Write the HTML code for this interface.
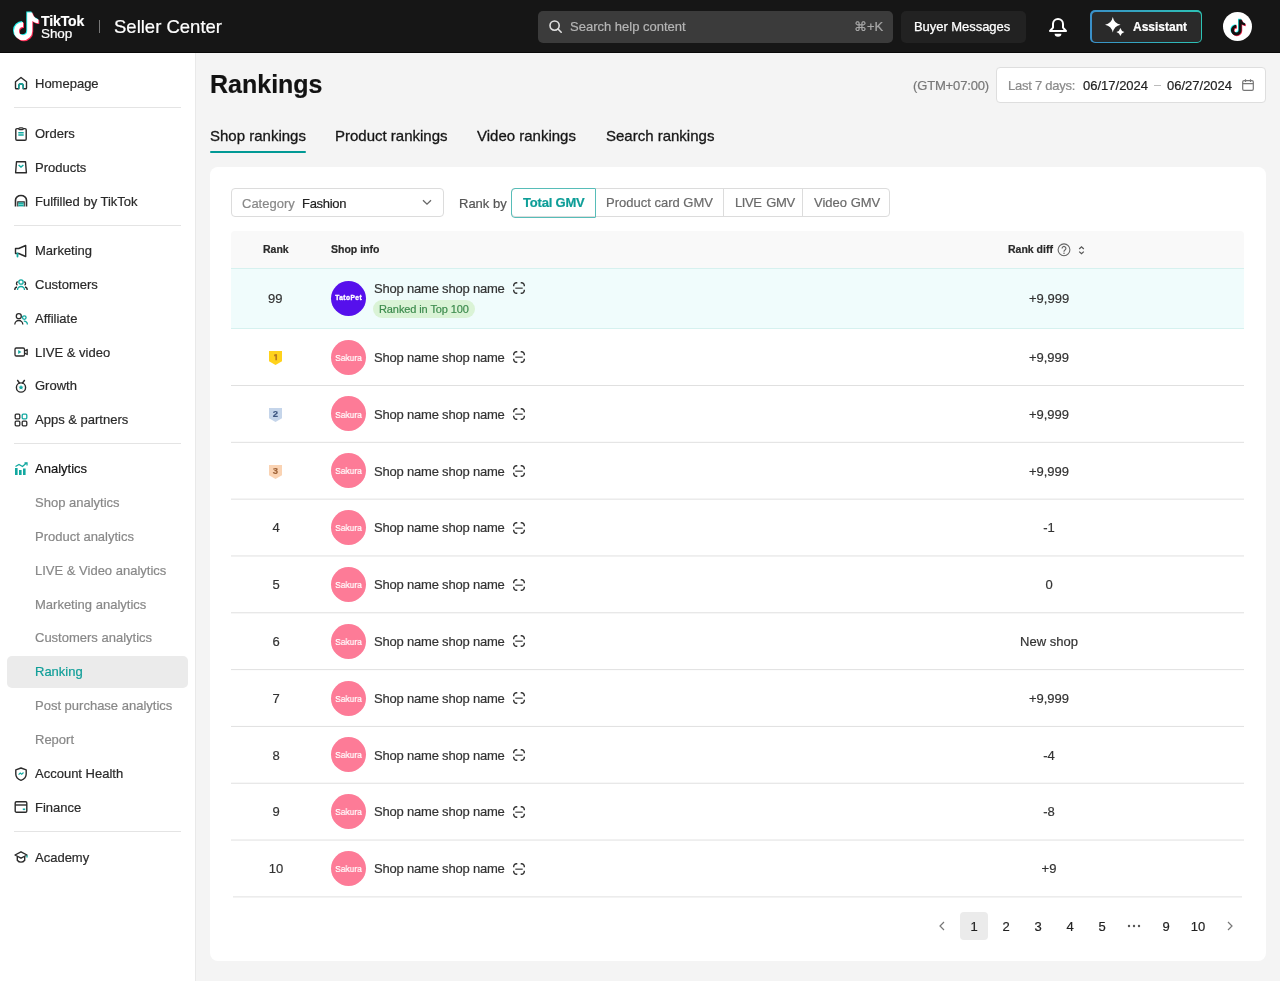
<!DOCTYPE html>
<html><head><meta charset="utf-8"><style>
*{box-sizing:border-box;margin:0;padding:0}
html,body{width:1280px;height:981px;overflow:hidden;background:#f4f4f4;font-family:"Liberation Sans",sans-serif;color:#121212}
.t{position:absolute;white-space:nowrap;line-height:1;will-change:transform;-webkit-text-stroke-width:0.2px}
.a{position:absolute}
svg{position:absolute;overflow:visible}
#hdr{position:absolute;left:0;top:0;width:1280px;height:53px;background:#161616;border-bottom:1px solid #080808}
#side{position:absolute;left:0;top:53px;width:196px;height:928px;background:#fff;border-right:1px solid #e9e9e9}
.nav{font-size:13px;color:#2a2a2a}
.sub{font-size:13px;color:#888}
.dv{position:absolute;left:14px;width:167px;height:1px;background:#e4e4e4}
.card{position:absolute;left:210px;top:167px;width:1056px;height:794px;background:#fff;border-radius:8px}
.row{position:absolute;left:231px;width:1013px}
.cell{font-size:13px;color:#333}
</style></head><body>
<div id="hdr"></div>
<svg style="left:14px;top:11.8px" width="25" height="29" viewBox="0 0 25 29"><path d="M13.2 0.5H18.3C18.7 3.6 21.2 6.8 24.4 7.3V11.2C21.9 11.1 19.9 10.3 18.3 9.1V19.1A9.2 9.2 0 1 1 9.1 9.9V15A4.1 4.1 0 1 0 13.2 19.1Z" fill="#25f4ee" transform="translate(-0.9,-0.9)"/><path d="M13.2 0.5H18.3C18.7 3.6 21.2 6.8 24.4 7.3V11.2C21.9 11.1 19.9 10.3 18.3 9.1V19.1A9.2 9.2 0 1 1 9.1 9.9V15A4.1 4.1 0 1 0 13.2 19.1Z" fill="#fe2c55" transform="translate(0.9,0.9)"/><path d="M13.2 0.5H18.3C18.7 3.6 21.2 6.8 24.4 7.3V11.2C21.9 11.1 19.9 10.3 18.3 9.1V19.1A9.2 9.2 0 1 1 9.1 9.9V15A4.1 4.1 0 1 0 13.2 19.1Z" fill="#fff"/></svg>
<div class="t" style="left:41px;top:13.75px;font-size:14px;font-weight:700;color:#fff;letter-spacing:-0.1px">TikTok</div>
<div class="t" style="left:41px;top:26.77px;font-size:13.5px;color:#fff;letter-spacing:-0.1px;-webkit-text-stroke:0.2px #fff">Shop</div>
<div class="a" style="left:99px;top:20px;width:1px;height:13px;background:#777"></div>
<div class="t" style="left:114px;top:17.54px;font-size:18.5px;color:#fff;-webkit-text-stroke:0.2px #fff">Seller Center</div>
<div class="a" style="left:538px;top:11px;width:355px;height:32px;background:#3b3b3b;border-radius:5px"></div>
<svg style="left:549px;top:20px" width="13" height="13" viewBox="0 0 13 13"><circle cx="5.6" cy="5.6" r="4.6" fill="none" stroke="#e0e0e0" stroke-width="1.6"/><path d="M9 9l3.2 3.2" stroke="#e0e0e0" stroke-width="1.6" stroke-linecap="round"/></svg>
<div class="t" style="left:570px;top:20.0px;font-size:13px;color:#b5b5b5">Search help content</div>
<div class="t" style="left:854px;top:20.0px;font-size:13px;color:#a8a8a8">&#8984;+K</div>
<div class="a" style="left:901px;top:11px;width:125px;height:32px;background:#222;border-radius:5px"></div>
<div class="t" style="left:914.3px;top:20.0px;font-size:13px;color:#fff;letter-spacing:-0.05px;-webkit-text-stroke:0.25px #fff">Buyer Messages</div>
<svg style="left:1043px;top:12px" width="30" height="30" viewBox="0 0 30 30"><path d="M7 19L10 15.6V11.9A5 5 0 0 1 20 11.9V15.6L23 19Z" fill="none" stroke="#fff" stroke-width="2" stroke-linejoin="round"/><path d="M11.6 21.8H18.4A3.4 2.9 0 0 1 11.6 21.8Z" fill="#fff"/></svg>
<div class="a" style="left:1090px;top:10px;width:112px;height:33px;border-radius:5px;background:linear-gradient(90deg,#3a8fc8,#2cc3b5);padding:1.5px"><div style="width:100%;height:100%;background:#2a2a2a;border-radius:4px"></div></div>
<svg style="left:1100px;top:12px" width="30" height="30" viewBox="1100 12 30 30"><path d="M1112.8 16.9Q1114.1 23.4 1120.6 24.7Q1114.1 26.0 1112.8 32.5Q1111.5 26.0 1105.0 24.7Q1111.5 23.4 1112.8 16.9Z" fill="#fff"/><circle cx="1120.4" cy="32.1" r="5" fill="#2a2a2a"/><path d="M1120.4 28.1Q1121.2 31.3 1124.4 32.1Q1121.2 32.9 1120.4 36.1Q1119.6000000000001 32.9 1116.4 32.1Q1119.6000000000001 31.3 1120.4 28.1Z" fill="#fff"/></svg>
<div class="t" style="left:1133px;top:21.04px;font-size:12px;font-weight:700;color:#fff">Assistant</div>
<div class="a" style="left:1223px;top:12px;width:29px;height:29px;border-radius:50%;background:#fff"></div>
<svg style="left:1230.5px;top:18.5px" width="14.5" height="17" viewBox="0 0 25 29"><path d="M13.2 0.5H18.3C18.7 3.6 21.2 6.8 24.4 7.3V11.2C21.9 11.1 19.9 10.3 18.3 9.1V19.1A9.2 9.2 0 1 1 9.1 9.9V15A4.1 4.1 0 1 0 13.2 19.1Z" fill="#25f4ee" transform="translate(-1.1,-1.1)"/><path d="M13.2 0.5H18.3C18.7 3.6 21.2 6.8 24.4 7.3V11.2C21.9 11.1 19.9 10.3 18.3 9.1V19.1A9.2 9.2 0 1 1 9.1 9.9V15A4.1 4.1 0 1 0 13.2 19.1Z" fill="#fe2c55" transform="translate(1.1,1.1)"/><path d="M13.2 0.5H18.3C18.7 3.6 21.2 6.8 24.4 7.3V11.2C21.9 11.1 19.9 10.3 18.3 9.1V19.1A9.2 9.2 0 1 1 9.1 9.9V15A4.1 4.1 0 1 0 13.2 19.1Z" fill="#111"/></svg>
<div id="side"></div>
<svg style="left:14px;top:76.2px" width="14" height="14" viewBox="0 0 14 14"><path d="M1.5 5.8L7 1.5l5.5 4.3v6.2c0 .5-.4.8-.8.8H9.2V10a2.2 2.2 0 0 0-4.4 0v2.8H2.3c-.5 0-.8-.3-.8-.8z" fill="none" stroke="#2b2b2b" stroke-width="1.4" stroke-linejoin="round"/><path d="M4.8 12.8V10a2.2 2.2 0 0 1 4.4 0v2.8" fill="none" stroke="#12a8a0" stroke-width="1.4"/></svg>
<div class="t nav" style="left:35px;top:76.7px;">Homepage</div>
<div class="dv" style="top:107px"></div>
<svg style="left:14px;top:126.5px" width="14" height="14" viewBox="0 0 14 14"><rect x="1.8" y="1.6" width="10.4" height="11.6" rx="1.2" fill="none" stroke="#2b2b2b" stroke-width="1.4"/><rect x="4.8" y="0.8" width="4.4" height="1.8" rx=".9" fill="#fff" stroke="#2b2b2b" stroke-width="1.2"/><path d="M4.3 5.8h5.4M4.3 8h5.4" stroke="#12a8a0" stroke-width="1.4"/></svg>
<div class="t nav" style="left:35px;top:127.0px;">Orders</div>
<svg style="left:14px;top:160.3px" width="14" height="14" viewBox="0 0 14 14"><path d="M2.5 1.8h9l.9 11H1.6z" fill="none" stroke="#2b2b2b" stroke-width="1.4" stroke-linejoin="round"/><path d="M4.6 5l2.4 2 2.4-2" fill="none" stroke="#12a8a0" stroke-width="1.5"/></svg>
<div class="t nav" style="left:35px;top:160.8px;">Products</div>
<svg style="left:14px;top:194.0px" width="14" height="14" viewBox="0 0 14 14"><path d="M1.5 12.5V6a5.5 4.5 0 0 1 11 0v6.5" fill="none" stroke="#2b2b2b" stroke-width="1.6"/><path d="M3.8 12.5V7.8h6.4v4.7" fill="none" stroke="#2b2b2b" stroke-width="1.2"/><rect x="4.4" y="8.4" width="5.2" height="4" fill="#12a8a0"/><path d="M4.4 10.4h5.2" stroke="#bfe" stroke-width=".6"/></svg>
<div class="t nav" style="left:35px;top:194.5px;">Fulfilled by TikTok</div>
<div class="dv" style="top:225px"></div>
<svg style="left:14px;top:243.8px" width="14" height="14" viewBox="0 0 14 14"><path d="M1.5 4.5h3.2l7-3v11l-7-3H1.5z" fill="none" stroke="#2b2b2b" stroke-width="1.4" stroke-linejoin="round"/><path d="M3.5 9.5v3" stroke="#12a8a0" stroke-width="1.8" stroke-linecap="round"/></svg>
<div class="t nav" style="left:35px;top:244.3px;">Marketing</div>
<svg style="left:14px;top:277.6px" width="14" height="14" viewBox="0 0 14 14"><circle cx="7" cy="4" r="2.2" fill="none" stroke="#12a8a0" stroke-width="1.3"/><path d="M3.5 12a3.5 3.5 0 0 1 7 0" fill="none" stroke="#12a8a0" stroke-width="1.3"/><path d="M3.4 7.2a2 2 0 0 1 .4-3.6M10.6 7.2a2 2 0 0 0-.4-3.6M.8 12a3 3 0 0 1 2.2-3M13.2 12a3 3 0 0 0-2.2-3" fill="none" stroke="#2b2b2b" stroke-width="1.3"/></svg>
<div class="t nav" style="left:35px;top:278.1px;">Customers</div>
<svg style="left:14px;top:311.5px" width="14" height="14" viewBox="0 0 14 14"><circle cx="4.8" cy="4.2" r="2.5" fill="none" stroke="#2b2b2b" stroke-width="1.3"/><path d="M.8 12.5a4 4 0 0 1 8 0" fill="none" stroke="#2b2b2b" stroke-width="1.3"/><circle cx="10.3" cy="5.6" r="1.8" fill="none" stroke="#12a8a0" stroke-width="1.3"/><path d="M9.8 9.2a3.2 3.2 0 0 1 3.6 3.3" fill="none" stroke="#12a8a0" stroke-width="1.3"/></svg>
<div class="t nav" style="left:35px;top:312.0px;">Affiliate</div>
<svg style="left:14px;top:345.2px" width="14" height="14" viewBox="0 0 14 14"><rect x="1" y="3" width="9.5" height="8" rx="1.3" fill="none" stroke="#2b2b2b" stroke-width="1.3"/><path d="M10.5 6l2.7-1.5v5L10.5 8" fill="none" stroke="#2b2b2b" stroke-width="1.3" stroke-linejoin="round"/><path d="M4.2 5v4l3.2-2z" fill="#12a8a0"/></svg>
<div class="t nav" style="left:35px;top:345.7px;">LIVE &amp; video</div>
<svg style="left:14px;top:378.9px" width="14" height="14" viewBox="0 0 14 14"><circle cx="7" cy="8.5" r="4.6" fill="none" stroke="#2b2b2b" stroke-width="1.4"/><path d="M3.3 1l2.5 3.5M10.7 1L8.2 4.5" stroke="#2b2b2b" stroke-width="1.4"/><path d="M7 6l.8 1.6 1.7.2-1.3 1.1.4 1.7L7 9.7l-1.6.9.4-1.7-1.3-1.1 1.7-.2z" fill="#12a8a0"/></svg>
<div class="t nav" style="left:35px;top:379.4px;">Growth</div>
<svg style="left:14px;top:412.6px" width="14" height="14" viewBox="0 0 14 14"><rect x="1.2" y="1.2" width="4.6" height="4.6" rx="1" fill="none" stroke="#2b2b2b" stroke-width="1.3"/><rect x="8.2" y="1.2" width="4.6" height="4.6" rx="1" fill="none" stroke="#12a8a0" stroke-width="1.3"/><rect x="1.2" y="8.2" width="4.6" height="4.6" rx="1" fill="none" stroke="#2b2b2b" stroke-width="1.3"/><rect x="8.2" y="8.2" width="4.6" height="4.6" rx="1" fill="none" stroke="#2b2b2b" stroke-width="1.3"/></svg>
<div class="t nav" style="left:35px;top:413.1px;">Apps &amp; partners</div>
<div class="dv" style="top:443px"></div>
<svg style="left:14px;top:461.9px" width="14" height="14" viewBox="0 0 14 14"><path d="M1 6h2.6v7H1zM5 8h2.6v5H5zM9 6.5h2.6V13H9z" fill="#12a8a0"/><path d="M1.5 4.5l3.5-2 3.5 2 4-3.5" fill="none" stroke="#12a8a0" stroke-width="1.3"/><path d="M10.5 1h2.5v2.5" fill="none" stroke="#12a8a0" stroke-width="1.3"/></svg>
<div class="t nav" style="left:35px;top:462.4px;color:#121212;">Analytics</div>
<div class="t sub" style="left:35px;top:496.2px;">Shop analytics</div>
<div class="t sub" style="left:35px;top:530.0px;">Product analytics</div>
<div class="t sub" style="left:35px;top:563.8px;">LIVE &amp; Video analytics</div>
<div class="t sub" style="left:35px;top:597.5px;">Marketing analytics</div>
<div class="t sub" style="left:35px;top:631.3px;">Customers analytics</div>
<div class="a" style="left:7px;top:656px;width:181px;height:32px;background:#ebebeb;border-radius:5px"></div>
<div class="t sub" style="left:35px;top:665.0px;color:#0f9e98;-webkit-text-stroke:0.2px #0f9e98">Ranking</div>
<div class="t sub" style="left:35px;top:699.4px;">Post purchase analytics</div>
<div class="t sub" style="left:35px;top:733.2px;">Report</div>
<svg style="left:14px;top:766.5px" width="14" height="14" viewBox="0 0 14 14"><path d="M7 1l5.2 1.9v4.2c0 3-2.3 5.3-5.2 6.3C4.1 12.4 1.8 10.1 1.8 7.1V2.9z" fill="none" stroke="#2b2b2b" stroke-width="1.4" stroke-linejoin="round"/><path d="M4.6 7.6l1.6-1.6 1.5 1.3 1.8-1.8" fill="none" stroke="#12a8a0" stroke-width="1.2"/></svg>
<div class="t nav" style="left:35px;top:767.0px;">Account Health</div>
<svg style="left:14px;top:800.3px" width="14" height="14" viewBox="0 0 14 14"><rect x="1.2" y="1.8" width="11.6" height="10.4" rx="1.2" fill="none" stroke="#2b2b2b" stroke-width="1.4"/><path d="M1.2 5h11.6" stroke="#2b2b2b" stroke-width="1.4"/><path d="M8.8 9.3h2.4" stroke="#12a8a0" stroke-width="1.6"/></svg>
<div class="t nav" style="left:35px;top:800.8px;">Finance</div>
<div class="dv" style="top:831px"></div>
<svg style="left:14px;top:850.0px" width="14" height="14" viewBox="0 0 14 14"><path d="M7 1.8L13 5 7 8.2 1 5z" fill="none" stroke="#2b2b2b" stroke-width="1.4" stroke-linejoin="round"/><path d="M3.3 6.5v3.7c1 1.3 2.3 1.9 3.7 1.9s2.7-.6 3.7-1.9V6.5" fill="none" stroke="#2b2b2b" stroke-width="1.4"/><path d="M13 5.2v2.3" stroke="#12a8a0" stroke-width="1.4"/></svg>
<div class="t nav" style="left:35px;top:850.5px;">Academy</div>
<div class="t" style="left:209.5px;top:71.54px;font-size:25px;font-weight:700;color:#121212">Rankings</div>
<div class="t" style="left:912.5px;top:79.2px;font-size:13px;color:#777;letter-spacing:-0.15px">(GTM+07:00)</div>
<div class="a" style="left:996px;top:67px;width:270px;height:35.5px;background:#fff;border:1px solid #dedede;border-radius:4px"></div>
<div class="t" style="left:1007.5px;top:78.8px;font-size:13px;color:#8a8a8a;letter-spacing:-0.25px">Last 7 days:</div>
<div class="t" style="left:1082.5px;top:78.8px;font-size:13px;color:#222">06/17/2024</div>
<div class="a" style="left:1154px;top:85px;width:7px;height:1px;background:#bbb"></div>
<div class="t" style="left:1166.5px;top:78.8px;font-size:13px;color:#222">06/27/2024</div>
<svg style="left:1242px;top:79px" width="12" height="12" viewBox="0 0 12 12"><rect x=".7" y="1.7" width="10.6" height="9.6" rx="1.3" fill="none" stroke="#777" stroke-width="1.2"/><path d="M.7 4.6h10.6M3.5 .3v2.6M8.5 .3v2.6" stroke="#777" stroke-width="1.2"/></svg>
<div class="t" style="left:210px;top:127.6px;font-size:15px;color:#161616;-webkit-text-stroke:0.3px #161616">Shop rankings</div>
<div class="t" style="left:334.5px;top:127.6px;font-size:15px;color:#161616;-webkit-text-stroke:0.3px #161616">Product rankings</div>
<div class="t" style="left:477px;top:127.6px;font-size:15px;color:#161616;-webkit-text-stroke:0.3px #161616">Video rankings</div>
<div class="t" style="left:605.5px;top:127.6px;font-size:15px;color:#161616;-webkit-text-stroke:0.3px #161616">Search rankings</div>
<div class="a" style="left:210px;top:151px;width:96px;height:2px;background:#009995;border-radius:1px"></div>
<div class="card"></div>
<div class="a" style="left:231px;top:188px;width:213px;height:29px;border:1px solid #dcdcdc;border-radius:4px;background:#fff"></div>
<div class="t" style="left:242px;top:196.6px;font-size:13px;color:#888">Category</div>
<div class="t" style="left:302px;top:196.6px;font-size:13px;color:#222;letter-spacing:-0.3px">Fashion</div>
<svg style="left:422px;top:199px" width="10" height="7" viewBox="0 0 10 7"><path d="M1 1.2l4 4 4-4" fill="none" stroke="#666" stroke-width="1.3"/></svg>
<div class="t" style="left:458.5px;top:196.5px;font-size:13px;color:#555">Rank by</div>
<div class="a" style="left:511px;top:188px;width:379px;height:29px;border:1px solid #dcdcdc;border-radius:4px;background:#fff"></div>
<div class="a" style="left:595px;top:188px;width:1px;height:29px;background:#dcdcdc"></div>
<div class="a" style="left:723px;top:188px;width:1px;height:29px;background:#dcdcdc"></div>
<div class="a" style="left:802px;top:188px;width:1px;height:29px;background:#dcdcdc"></div>
<div class="a" style="left:511px;top:187.5px;width:84.5px;height:30px;border:1.3px solid #57bdb8;border-radius:4px 1px 1px 4px"></div>
<div class="t" style="left:523px;top:196.3px;font-size:13px;font-weight:700;color:#0d9d97;letter-spacing:-0.2px">Total GMV</div>
<div class="t" style="left:606px;top:196.3px;font-size:13px;color:#6a6a6a">Product card GMV</div>
<div class="t" style="left:735px;top:196.3px;font-size:13px;color:#6a6a6a;letter-spacing:-0.4px;word-spacing:1.5px">LIVE GMV</div>
<div class="t" style="left:813.5px;top:196.3px;font-size:13px;color:#6a6a6a">Video GMV</div>
<div class="a" style="left:231px;top:231px;width:1013px;height:37px;background:#f9f9f9;border-radius:4px 4px 0 0"></div>
<div class="t" style="left:262.5px;top:244.01px;font-size:10.5px;font-weight:700;color:#2a2a2a">Rank</div>
<div class="t" style="left:330.5px;top:244.01px;font-size:10.5px;font-weight:700;color:#2a2a2a">Shop info</div>
<div class="t" style="left:1008px;top:244.31px;font-size:10.5px;font-weight:700;color:#2a2a2a">Rank diff</div>
<svg style="left:1057px;top:243px" width="14" height="14" viewBox="0 0 14 14"><circle cx="7" cy="6.8" r="5.9" fill="none" stroke="#666" stroke-width="1.1"/><path d="M5.1 5.4a1.9 1.9 0 1 1 2.9 1.6c-.6.4-1 .8-1 1.5v.3" fill="none" stroke="#666" stroke-width="1.2"/><circle cx="7" cy="10.2" r=".75" fill="#666"/></svg>
<svg style="left:1078.3px;top:245.6px" width="7" height="9" viewBox="0 0 7 9"><path d="M1.2 3L3.5 0.9L5.8 3M1.2 5.6L3.5 7.7L5.8 5.6" fill="none" stroke="#555" stroke-width="1.2"/></svg>
<div class="a" style="left:231px;top:268px;width:1013px;height:61px;background:#f0fcfc;border-top:1px solid #d6f1ef;border-bottom:1px solid #d6f1ef"></div>
<div class="t cell" style="left:268px;top:291.7px">99</div>
<div class="a" style="left:331px;top:280.5px;width:35.3px;height:35.3px;border-radius:50%;background:#5610ec"></div>
<div class="t" style="left:331px;top:295.31px;width:35.3px;text-align:center;font-size:6.6px;font-weight:700;color:#fff;letter-spacing:0.45px;-webkit-text-stroke:0.35px #fff">TatoPet</div>
<div class="t cell" style="left:373.5px;top:281.5px;letter-spacing:-0.2px">Shop name shop name</div>
<svg style="left:513px;top:281.6px" width="12" height="12" viewBox="0 0 12 12"><path d="M0.7 4.3V3.5A2.8 2.8 0 0 1 3.5 0.7H4.3M7.7 0.7H8.5A2.8 2.8 0 0 1 11.3 3.5V4.3M11.3 7.7V8.5A2.8 2.8 0 0 1 8.5 11.3H7.7M4.3 11.3H3.5A2.8 2.8 0 0 1 0.7 8.5V7.7" fill="none" stroke="#333" stroke-width="1.4"/><path d="M2.3 6.2H9.7" stroke="#555" stroke-width="1.4"/></svg>
<div class="a" style="left:373px;top:300px;width:102px;height:18px;border-radius:9px;background:#daf3d6"></div>
<div class="t" style="left:379px;top:303.69px;font-size:11px;color:#3b8a4c;letter-spacing:-0.1px">Ranked in Top 100</div>
<div class="t cell" style="left:1029px;top:291.6px;width:40px;text-align:center">+9,999</div>
<svg style="left:0;top:0" width="1280" height="981" viewBox="0 0 1280 981"><rect x="231" y="385.0" width="1013" height="1" fill="#e0e0e0"/><rect x="231" y="441.82" width="1013" height="1" fill="#e0e0e0"/><rect x="231" y="498.64" width="1013" height="1" fill="#e0e0e0"/><rect x="231" y="555.46" width="1013" height="1" fill="#e0e0e0"/><rect x="231" y="612.28" width="1013" height="1" fill="#e0e0e0"/><rect x="231" y="669.1" width="1013" height="1" fill="#e0e0e0"/><rect x="231" y="725.92" width="1013" height="1" fill="#e0e0e0"/><rect x="231" y="782.74" width="1013" height="1" fill="#e0e0e0"/><rect x="231" y="839.56" width="1013" height="1" fill="#e0e0e0"/><rect x="233" y="896.38" width="1009" height="1" fill="#e0e0e0"/></svg>
<svg style="left:269px;top:351.25px" width="13" height="14" viewBox="0 0 13 14"><path d="M0 0h13v10.2L6.5 14.1 0 10.2z" fill="#ffd21c"/><path d="M5.2 4.6L7.2 3.8V9.3" fill="none" stroke="#b87a1e" stroke-width="1.7" stroke-linejoin="round" stroke-linecap="butt"/></svg>
<div class="a" style="left:331px;top:339.75px;width:35px;height:35px;border-radius:50%;background:#fd7b97"></div>
<div class="t" style="left:331px;width:35px;text-align:center;top:352.85px;font-size:9.8px;color:#fff;transform:scaleX(0.86)">Sakura</div>
<div class="t cell" style="left:373.5px;top:351.05px;letter-spacing:-0.2px">Shop name shop name</div>
<svg style="left:513px;top:351.45px" width="12" height="12" viewBox="0 0 12 12"><path d="M0.7 4.3V3.5A2.8 2.8 0 0 1 3.5 0.7H4.3M7.7 0.7H8.5A2.8 2.8 0 0 1 11.3 3.5V4.3M11.3 7.7V8.5A2.8 2.8 0 0 1 8.5 11.3H7.7M4.3 11.3H3.5A2.8 2.8 0 0 1 0.7 8.5V7.7" fill="none" stroke="#333" stroke-width="1.4"/><path d="M2.3 6.2H9.7" stroke="#555" stroke-width="1.4"/></svg>
<div class="t cell" style="left:998.5px;top:351.05px;width:100px;text-align:center">+9,999</div>
<svg style="left:269px;top:407.91px" width="13" height="14" viewBox="0 0 13 14"><path d="M0 0h13v10.2L6.5 14.1 0 10.2z" fill="#c5d5ea"/></svg>
<div class="t" style="left:269.3px;width:13px;text-align:center;top:409.47px;font-size:9.5px;font-weight:700;color:#3d5680">2</div>
<div class="a" style="left:331px;top:396.41px;width:35px;height:35px;border-radius:50%;background:#fd7b97"></div>
<div class="t" style="left:331px;width:35px;text-align:center;top:409.51px;font-size:9.8px;color:#fff;transform:scaleX(0.86)">Sakura</div>
<div class="t cell" style="left:373.5px;top:407.71px;letter-spacing:-0.2px">Shop name shop name</div>
<svg style="left:513px;top:408.11px" width="12" height="12" viewBox="0 0 12 12"><path d="M0.7 4.3V3.5A2.8 2.8 0 0 1 3.5 0.7H4.3M7.7 0.7H8.5A2.8 2.8 0 0 1 11.3 3.5V4.3M11.3 7.7V8.5A2.8 2.8 0 0 1 8.5 11.3H7.7M4.3 11.3H3.5A2.8 2.8 0 0 1 0.7 8.5V7.7" fill="none" stroke="#333" stroke-width="1.4"/><path d="M2.3 6.2H9.7" stroke="#555" stroke-width="1.4"/></svg>
<div class="t cell" style="left:998.5px;top:407.71px;width:100px;text-align:center">+9,999</div>
<svg style="left:269px;top:464.73px" width="13" height="14" viewBox="0 0 13 14"><path d="M0 0h13v10.2L6.5 14.1 0 10.2z" fill="#fad3b3"/></svg>
<div class="t" style="left:269.3px;width:13px;text-align:center;top:466.29px;font-size:9.5px;font-weight:700;color:#a0653a">3</div>
<div class="a" style="left:331px;top:453.23px;width:35px;height:35px;border-radius:50%;background:#fd7b97"></div>
<div class="t" style="left:331px;width:35px;text-align:center;top:466.33px;font-size:9.8px;color:#fff;transform:scaleX(0.86)">Sakura</div>
<div class="t cell" style="left:373.5px;top:464.53px;letter-spacing:-0.2px">Shop name shop name</div>
<svg style="left:513px;top:464.93px" width="12" height="12" viewBox="0 0 12 12"><path d="M0.7 4.3V3.5A2.8 2.8 0 0 1 3.5 0.7H4.3M7.7 0.7H8.5A2.8 2.8 0 0 1 11.3 3.5V4.3M11.3 7.7V8.5A2.8 2.8 0 0 1 8.5 11.3H7.7M4.3 11.3H3.5A2.8 2.8 0 0 1 0.7 8.5V7.7" fill="none" stroke="#333" stroke-width="1.4"/><path d="M2.3 6.2H9.7" stroke="#555" stroke-width="1.4"/></svg>
<div class="t cell" style="left:998.5px;top:464.53px;width:100px;text-align:center">+9,999</div>
<div class="t cell" style="left:255.5px;width:40px;text-align:center;top:521.35px">4</div>
<div class="a" style="left:331px;top:510.05px;width:35px;height:35px;border-radius:50%;background:#fd7b97"></div>
<div class="t" style="left:331px;width:35px;text-align:center;top:523.15px;font-size:9.8px;color:#fff;transform:scaleX(0.86)">Sakura</div>
<div class="t cell" style="left:373.5px;top:521.35px;letter-spacing:-0.2px">Shop name shop name</div>
<svg style="left:513px;top:521.75px" width="12" height="12" viewBox="0 0 12 12"><path d="M0.7 4.3V3.5A2.8 2.8 0 0 1 3.5 0.7H4.3M7.7 0.7H8.5A2.8 2.8 0 0 1 11.3 3.5V4.3M11.3 7.7V8.5A2.8 2.8 0 0 1 8.5 11.3H7.7M4.3 11.3H3.5A2.8 2.8 0 0 1 0.7 8.5V7.7" fill="none" stroke="#333" stroke-width="1.4"/><path d="M2.3 6.2H9.7" stroke="#555" stroke-width="1.4"/></svg>
<div class="t cell" style="left:998.5px;top:521.35px;width:100px;text-align:center">-1</div>
<div class="t cell" style="left:255.5px;width:40px;text-align:center;top:578.17px">5</div>
<div class="a" style="left:331px;top:566.87px;width:35px;height:35px;border-radius:50%;background:#fd7b97"></div>
<div class="t" style="left:331px;width:35px;text-align:center;top:579.97px;font-size:9.8px;color:#fff;transform:scaleX(0.86)">Sakura</div>
<div class="t cell" style="left:373.5px;top:578.17px;letter-spacing:-0.2px">Shop name shop name</div>
<svg style="left:513px;top:578.57px" width="12" height="12" viewBox="0 0 12 12"><path d="M0.7 4.3V3.5A2.8 2.8 0 0 1 3.5 0.7H4.3M7.7 0.7H8.5A2.8 2.8 0 0 1 11.3 3.5V4.3M11.3 7.7V8.5A2.8 2.8 0 0 1 8.5 11.3H7.7M4.3 11.3H3.5A2.8 2.8 0 0 1 0.7 8.5V7.7" fill="none" stroke="#333" stroke-width="1.4"/><path d="M2.3 6.2H9.7" stroke="#555" stroke-width="1.4"/></svg>
<div class="t cell" style="left:998.5px;top:578.17px;width:100px;text-align:center">0</div>
<div class="t cell" style="left:255.5px;width:40px;text-align:center;top:634.99px">6</div>
<div class="a" style="left:331px;top:623.69px;width:35px;height:35px;border-radius:50%;background:#fd7b97"></div>
<div class="t" style="left:331px;width:35px;text-align:center;top:636.79px;font-size:9.8px;color:#fff;transform:scaleX(0.86)">Sakura</div>
<div class="t cell" style="left:373.5px;top:634.99px;letter-spacing:-0.2px">Shop name shop name</div>
<svg style="left:513px;top:635.39px" width="12" height="12" viewBox="0 0 12 12"><path d="M0.7 4.3V3.5A2.8 2.8 0 0 1 3.5 0.7H4.3M7.7 0.7H8.5A2.8 2.8 0 0 1 11.3 3.5V4.3M11.3 7.7V8.5A2.8 2.8 0 0 1 8.5 11.3H7.7M4.3 11.3H3.5A2.8 2.8 0 0 1 0.7 8.5V7.7" fill="none" stroke="#333" stroke-width="1.4"/><path d="M2.3 6.2H9.7" stroke="#555" stroke-width="1.4"/></svg>
<div class="t cell" style="left:998.5px;top:634.99px;width:100px;text-align:center">New shop</div>
<div class="t cell" style="left:255.5px;width:40px;text-align:center;top:691.81px">7</div>
<div class="a" style="left:331px;top:680.51px;width:35px;height:35px;border-radius:50%;background:#fd7b97"></div>
<div class="t" style="left:331px;width:35px;text-align:center;top:693.61px;font-size:9.8px;color:#fff;transform:scaleX(0.86)">Sakura</div>
<div class="t cell" style="left:373.5px;top:691.81px;letter-spacing:-0.2px">Shop name shop name</div>
<svg style="left:513px;top:692.21px" width="12" height="12" viewBox="0 0 12 12"><path d="M0.7 4.3V3.5A2.8 2.8 0 0 1 3.5 0.7H4.3M7.7 0.7H8.5A2.8 2.8 0 0 1 11.3 3.5V4.3M11.3 7.7V8.5A2.8 2.8 0 0 1 8.5 11.3H7.7M4.3 11.3H3.5A2.8 2.8 0 0 1 0.7 8.5V7.7" fill="none" stroke="#333" stroke-width="1.4"/><path d="M2.3 6.2H9.7" stroke="#555" stroke-width="1.4"/></svg>
<div class="t cell" style="left:998.5px;top:691.81px;width:100px;text-align:center">+9,999</div>
<div class="t cell" style="left:255.5px;width:40px;text-align:center;top:748.63px">8</div>
<div class="a" style="left:331px;top:737.33px;width:35px;height:35px;border-radius:50%;background:#fd7b97"></div>
<div class="t" style="left:331px;width:35px;text-align:center;top:750.43px;font-size:9.8px;color:#fff;transform:scaleX(0.86)">Sakura</div>
<div class="t cell" style="left:373.5px;top:748.63px;letter-spacing:-0.2px">Shop name shop name</div>
<svg style="left:513px;top:749.03px" width="12" height="12" viewBox="0 0 12 12"><path d="M0.7 4.3V3.5A2.8 2.8 0 0 1 3.5 0.7H4.3M7.7 0.7H8.5A2.8 2.8 0 0 1 11.3 3.5V4.3M11.3 7.7V8.5A2.8 2.8 0 0 1 8.5 11.3H7.7M4.3 11.3H3.5A2.8 2.8 0 0 1 0.7 8.5V7.7" fill="none" stroke="#333" stroke-width="1.4"/><path d="M2.3 6.2H9.7" stroke="#555" stroke-width="1.4"/></svg>
<div class="t cell" style="left:998.5px;top:748.63px;width:100px;text-align:center">-4</div>
<div class="t cell" style="left:255.5px;width:40px;text-align:center;top:805.45px">9</div>
<div class="a" style="left:331px;top:794.15px;width:35px;height:35px;border-radius:50%;background:#fd7b97"></div>
<div class="t" style="left:331px;width:35px;text-align:center;top:807.25px;font-size:9.8px;color:#fff;transform:scaleX(0.86)">Sakura</div>
<div class="t cell" style="left:373.5px;top:805.45px;letter-spacing:-0.2px">Shop name shop name</div>
<svg style="left:513px;top:805.85px" width="12" height="12" viewBox="0 0 12 12"><path d="M0.7 4.3V3.5A2.8 2.8 0 0 1 3.5 0.7H4.3M7.7 0.7H8.5A2.8 2.8 0 0 1 11.3 3.5V4.3M11.3 7.7V8.5A2.8 2.8 0 0 1 8.5 11.3H7.7M4.3 11.3H3.5A2.8 2.8 0 0 1 0.7 8.5V7.7" fill="none" stroke="#333" stroke-width="1.4"/><path d="M2.3 6.2H9.7" stroke="#555" stroke-width="1.4"/></svg>
<div class="t cell" style="left:998.5px;top:805.45px;width:100px;text-align:center">-8</div>
<div class="t cell" style="left:255.5px;width:40px;text-align:center;top:862.27px">10</div>
<div class="a" style="left:331px;top:850.97px;width:35px;height:35px;border-radius:50%;background:#fd7b97"></div>
<div class="t" style="left:331px;width:35px;text-align:center;top:864.07px;font-size:9.8px;color:#fff;transform:scaleX(0.86)">Sakura</div>
<div class="t cell" style="left:373.5px;top:862.27px;letter-spacing:-0.2px">Shop name shop name</div>
<svg style="left:513px;top:862.67px" width="12" height="12" viewBox="0 0 12 12"><path d="M0.7 4.3V3.5A2.8 2.8 0 0 1 3.5 0.7H4.3M7.7 0.7H8.5A2.8 2.8 0 0 1 11.3 3.5V4.3M11.3 7.7V8.5A2.8 2.8 0 0 1 8.5 11.3H7.7M4.3 11.3H3.5A2.8 2.8 0 0 1 0.7 8.5V7.7" fill="none" stroke="#333" stroke-width="1.4"/><path d="M2.3 6.2H9.7" stroke="#555" stroke-width="1.4"/></svg>
<div class="t cell" style="left:998.5px;top:862.27px;width:100px;text-align:center">+9</div>
<div class="a" style="left:960px;top:912px;width:28px;height:28px;background:#ebebeb;border-radius:4px"></div>
<svg style="left:938px;top:921px" width="8" height="10" viewBox="0 0 8 10"><path d="M6 1L2 5l4 4" fill="none" stroke="#777" stroke-width="1.2"/></svg>
<svg style="left:1226px;top:921px" width="8" height="10" viewBox="0 0 8 10"><path d="M2 1l4 4-4 4" fill="none" stroke="#777" stroke-width="1.2"/></svg>
<div class="t" style="left:954px;width:40px;text-align:center;top:919.5px;font-size:13px;color:#222">1</div>
<div class="t" style="left:986px;width:40px;text-align:center;top:919.5px;font-size:13px;color:#222">2</div>
<div class="t" style="left:1018px;width:40px;text-align:center;top:919.5px;font-size:13px;color:#222">3</div>
<div class="t" style="left:1050px;width:40px;text-align:center;top:919.5px;font-size:13px;color:#222">4</div>
<div class="t" style="left:1082px;width:40px;text-align:center;top:919.5px;font-size:13px;color:#222">5</div>
<div class="t" style="left:1146px;width:40px;text-align:center;top:919.5px;font-size:13px;color:#222">9</div>
<div class="t" style="left:1178px;width:40px;text-align:center;top:919.5px;font-size:13px;color:#222">10</div>
<svg style="left:1127px;top:924px" width="14" height="4" viewBox="0 0 14 4"><circle cx="2" cy="2" r="1.2" fill="#555"/><circle cx="7" cy="2" r="1.2" fill="#555"/><circle cx="12" cy="2" r="1.2" fill="#555"/></svg>
</body></html>
